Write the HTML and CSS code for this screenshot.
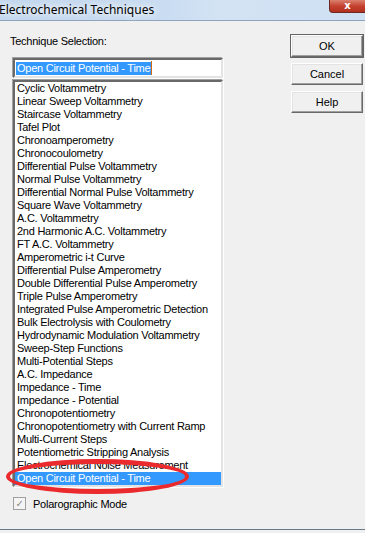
FILE: index.html
```html
<!doctype html>
<html lang="en">
<head>
    <meta charset="utf-8">
    <title>Electrochemical Techniques</title>
    <link rel="stylesheet" href="styles.css">
</head>
<body>
    <div class="window">
        <div class="titlebar">
            <span class="title">Electrochemical Techniques</span>
            <span class="close">x</span>
        </div>

        <div class="client">
            <div class="main">
                <p class="label">Technique Selection:</p>
                <div class="edit"><span class="sel">Open Circuit Potential - Time</span><span class="caret"></span></div>
                <ul class="list">
                    <li>Cyclic Voltammetry</li>
                    <li>Linear Sweep Voltammetry</li>
                    <li>Staircase Voltammetry</li>
                    <li>Tafel Plot</li>
                    <li>Chronoamperometry</li>
                    <li>Chronocoulometry</li>
                    <li>Differential Pulse Voltammetry</li>
                    <li>Normal Pulse Voltammetry</li>
                    <li>Differential Normal Pulse Voltammetry</li>
                    <li>Square Wave Voltammetry</li>
                    <li>A.C. Voltammetry</li>
                    <li>2nd Harmonic A.C. Voltammetry</li>
                    <li>FT A.C. Voltammetry</li>
                    <li>Amperometric i-t Curve</li>
                    <li>Differential Pulse Amperometry</li>
                    <li>Double Differential Pulse Amperometry</li>
                    <li>Triple Pulse Amperometry</li>
                    <li>Integrated Pulse Amperometric Detection</li>
                    <li>Bulk Electrolysis with Coulometry</li>
                    <li>Hydrodynamic Modulation Voltammetry</li>
                    <li>Sweep-Step Functions</li>
                    <li>Multi-Potential Steps</li>
                    <li>A.C. Impedance</li>
                    <li>Impedance - Time</li>
                    <li>Impedance - Potential</li>
                    <li>Chronopotentiometry</li>
                    <li>Chronopotentiometry with Current Ramp</li>
                    <li>Multi-Current Steps</li>
                    <li>Potentiometric Stripping Analysis</li>
                    <li>Electrochemical Noise Measurement</li>
                    <li class="selected">Open Circuit Potential - Time</li>
                </ul>
                <div class="check">
                    <span class="box">&#10003;</span>
                    <span>Polarographic Mode</span>
                </div>
            </div>

            <div class="buttons">
                <button class="btn btn-default">OK</button>
                <button class="btn">Cancel</button>
                <button class="btn">Help</button>
            </div>
        </div>

        <div class="ring"></div>
    </div>
</body>
</html>
```

FILE: styles.css
```css
body {
    margin: 0;
    font-family: "Liberation Sans", Arial, sans-serif;
    font-size: 11px;
    letter-spacing: -0.25px;
    background: #f0f0f0;
}
.window {
    position: relative;
    width: 365px;
    height: 533px;
    overflow: hidden;
    background: #f0f0f0;
}
.titlebar {
    height: 20px;
    display: flex;
    align-items: center;
    justify-content: space-between;
    background: linear-gradient(90deg, #c2d7ee 0%, #c9dcf1 45%, #d3e3f4 60%, #cfe0f3 100%);
    border-bottom: 1px solid #8ea4bd;
}
.title {
    font-family: "Noto Sans", sans-serif;
    font-size: 12px;
    letter-spacing: 0;
    color: #000;
    margin-left: -1px;
    padding-bottom: 2px;
    text-shadow: 0 0 6px #fff, 0 0 8px #fff;
}
.close {
    align-self: flex-start;
    width: 35px;
    height: 12px;
    border: 1px solid #6d2a22;
    border-top: 0;
    border-right: 0;
    border-radius: 0 0 0 4px;
    background: linear-gradient(#d9826f, #c5422f 50%, #b1301f);
    color: #fff;
    font-family: "DejaVu Sans", sans-serif;
    font-weight: bold;
    font-size: 10px;
    letter-spacing: 0;
    line-height: 11px;
    text-align: center;
}
.client {
    display: flex;
    justify-content: space-between;
    height: 508px;
    border-bottom: 1px solid #6b7a8a;
}
.main {
    padding-left: 13px;
    width: 210px;
}
.label {
    margin: 14px 0 0 -3px;
    line-height: 13px;
}
.edit {
    margin-top: 10px;
    height: 16px;
    padding: 0 0 0 1px;
    background: #fff;
    border: 2px solid;
    border-color: #696969 #e3e3e3 #e3e3e3 #696969;
    box-shadow: -1px -1px 0 #a0a0a0, 1px 1px 0 #fff;
    display: flex;
    align-items: center;
}
.sel {
    background: #3399ff;
    color: #fff;
    line-height: 13px;
    padding: 0 1px;
}
.caret {
    width: 1px;
    height: 14px;
    background: #d06a10;
}
.list {
    list-style: none;
    margin: 2px 0 0;
    padding: 0;
    background: #fff;
    border: 2px solid;
    border-color: #696969 #e3e3e3 #e3e3e3 #696969;
    box-shadow: -1px -1px 0 #a0a0a0, 1px 1px 0 #fff;
}
.list li {
    height: 13px;
    line-height: 13px;
    padding-left: 2px;
    white-space: nowrap;
    color: #000;
}
.list li.selected {
    background: #3399ff;
    color: #fff;
}
.check {
    display: flex;
    align-items: center;
    gap: 7px;
    margin-top: 10px;
}
.box {
    width: 11px;
    height: 11px;
    border: 1px solid #a0a0a0;
    background: #f4f4f4;
    color: #8a8a8a;
    font-family: "DejaVu Sans", sans-serif;
    font-size: 10px;
    line-height: 11px;
    text-align: center;
}
.buttons {
    display: flex;
    flex-direction: column;
    gap: 6px;
    margin: 14px 2px 0 0;
}
.btn {
    width: 72px;
    height: 22px;
    padding: 0;
    font-family: "Liberation Sans", Arial, sans-serif;
    font-size: 11px;
    color: #000;
    background: #f0f0f0;
    border: 1px solid;
    border-color: #fff #696969 #696969 #fff;
    box-shadow: inset -1px -1px 0 #a0a0a0, inset 1px 1px 0 #e3e3e3;
}
.btn-default {
    outline: 1px solid #646464;
}
.ring {
    position: absolute;
    left: 6px;
    top: 459px;
    width: 175px;
    height: 25px;
    border: 4px solid #ea2a2d;
    border-top-width: 5px;
    border-bottom-width: 5px;
    border-radius: 50%;
}
```
